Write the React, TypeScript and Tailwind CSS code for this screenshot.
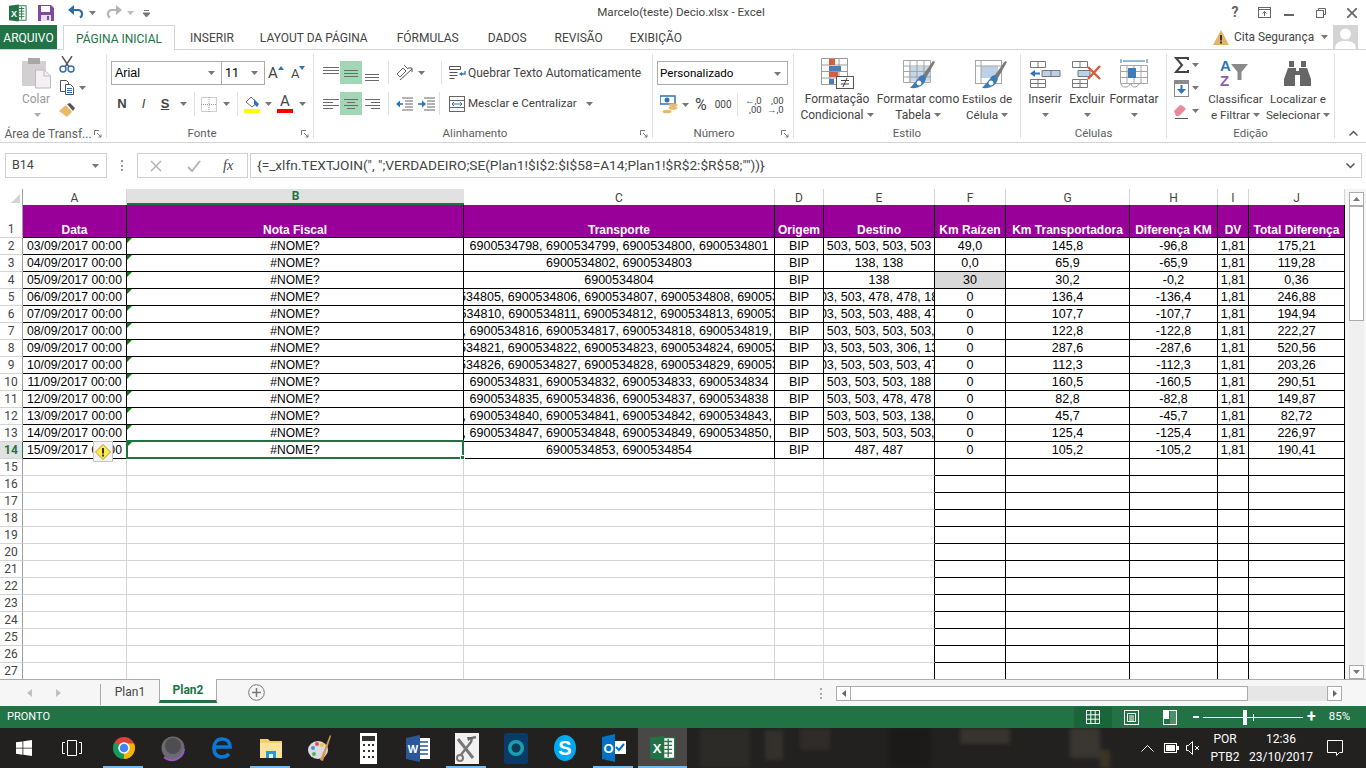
import type { ReactNode } from "react";

const rows = [
  ["03/09/2017 00:00", "6900534798, 6900534799, 6900534800, 6900534801", "503, 503, 503, 503", "49,0", "145,8", "-96,8", "175,21"],
  ["04/09/2017 00:00", "6900534802, 6900534803", "138, 138", "0,0", "65,9", "-65,9", "119,28"],
  ["05/09/2017 00:00", "6900534804", "138", "30", "30,2", "-0,2", "0,36"],
  ["06/09/2017 00:00", "6900534805, 6900534806, 6900534807, 6900534808, 6900534809", "503, 503, 478, 478, 188", "0", "136,4", "-136,4", "246,88"],
  ["07/09/2017 00:00", "6900534810, 6900534811, 6900534812, 6900534813, 6900534814", "503, 503, 503, 488, 478", "0", "107,7", "-107,7", "194,94"],
  ["08/09/2017 00:00", "6900534815, 6900534816, 6900534817, 6900534818, 6900534819, 6900534820", "503, 503, 503, 503, 503, 503", "0", "122,8", "-122,8", "222,27"],
  ["09/09/2017 00:00", "6900534821, 6900534822, 6900534823, 6900534824, 6900534825", "503, 503, 503, 306, 138", "0", "287,6", "-287,6", "520,56"],
  ["10/09/2017 00:00", "6900534826, 6900534827, 6900534828, 6900534829, 6900534830", "503, 503, 503, 503, 478", "0", "112,3", "-112,3", "203,26"],
  ["11/09/2017 00:00", "6900534831, 6900534832, 6900534833, 6900534834", "503, 503, 503, 188", "0", "160,5", "-160,5", "290,51"],
  ["12/09/2017 00:00", "6900534835, 6900534836, 6900534837, 6900534838", "503, 503, 478, 478", "0", "82,8", "-82,8", "149,87"],
  ["13/09/2017 00:00", "6900534839, 6900534840, 6900534841, 6900534842, 6900534843, 6900534844", "503, 503, 503, 503, 138, 138", "0", "45,7", "-45,7", "82,72"],
  ["14/09/2017 00:00", "6900534846, 6900534847, 6900534848, 6900534849, 6900534850, 6900534851", "503, 503, 503, 503, 503, 503", "0", "125,4", "-125,4", "226,97"],
  ["15/09/2017 00:00", "6900534853, 6900534854", "487, 487", "0", "105,2", "-105,2", "190,41"],
];

const colA = "w-[104px]";
const colB = "w-[337px]";
const colC = "w-[311px]";
const colD = "w-[49px]";
const colE = "w-[111px]";
const colF = "w-[71px]";
const colG = "w-[124px]";
const colH = "w-[88px]";
const colI = "w-[31px]";
const colJ = "w-[96px]";

function Caret({ className = "" }: { className?: string }) {
  return (
    <svg width="7" height="4" viewBox="0 0 7 4" className={"shrink-0 " + className}>
      <path d="M0 0h7L3.5 4z" fill="#777" />
    </svg>
  );
}

function Launcher() {
  return (
    <svg width="8" height="8" viewBox="0 0 8 8" className="absolute right-[4px] top-[2px]" fill="none" stroke="#777">
      <path d="M.5 5V.5H5" />
      <path d="M3 3l4 4M7 4.5V7H4.5" />
    </svg>
  );
}

function Group({ label, width, labelPad = "", launcher, children }: { label: string; width: string; labelPad?: string; launcher?: boolean; children: ReactNode }) {
  return (
    <div className={"flex h-[84px] shrink-0 flex-col border-r border-[#e1e1e1] " + width}>
      <div className="h-[74px] shrink-0">{children}</div>
      <div className={"relative flex h-[11px] shrink-0 items-center justify-center text-[#5e5e5e] " + labelPad}>
        <span className="whitespace-nowrap">{label}</span>
        {launcher && <Launcher />}
      </div>
    </div>
  );
}

function Lines({ ys }: { ys: [number, number, number][] }) {
  return (
    <svg width="18" height="18" viewBox="0 0 18 18" stroke="#6a6a6a" fill="none">
      {ys.map(([y, a, b]) => (
        <path key={y + "-" + a} d={`M${a} ${y + 0.5}H${b}`} />
      ))}
    </svg>
  );
}

function BigButton({ width, lines, icon, caretOnly }: { width: string; lines: string[]; icon: ReactNode; caretOnly?: boolean }) {
  return (
    <div className={"flex shrink-0 flex-col items-center " + width}>
      <div className="flex h-[36px] items-center">{icon}</div>
      <div className="whitespace-nowrap leading-[16px]">{lines[0]}</div>
      {caretOnly ? (
        <div className="flex h-[16px] items-center"><Caret /></div>
      ) : (
        <div className="flex items-center gap-[3px] whitespace-nowrap leading-[16px]">
          {lines[1]}
          <Caret />
        </div>
      )}
    </div>
  );
}

function ExcelLogo({ size = 20 }: { size?: number }) {
  return (
    <svg width={size} height={size} viewBox="0 0 20 20">
      <rect x="7" y="2" width="12" height="16" fill="#fff" stroke="#217346" />
      <path d="M11 5h6M11 8h6M11 11h6M11 14h6M14 3v14" stroke="#217346" />
      <path d="M0 2l11-1.5v19L0 18z" fill="#217346" />
      <text x="5.5" y="14" textAnchor="middle" fill="#fff" fontSize="10" fontWeight="700" fontFamily="Liberation Sans">X</text>
    </svg>
  );
}

function TitleBar() {
  return (
    <div className="flex h-[25px] shrink-0 items-center text-[#444]">
      <div className="ml-[9px]"><ExcelLogo size={18} /></div>
      <svg width="16" height="16" viewBox="0 0 16 16" className="ml-[11px]">
        <path d="M0 0h13l3 3v13H0z" fill="#7c4b9e" />
        <rect x="3" y="1" width="9" height="6" fill="#fff" />
        <rect x="3" y="10" width="10" height="6" fill="#e8dff0" />
        <rect x="9" y="11" width="2" height="4" fill="#7c4b9e" />
      </svg>
      <svg width="16" height="15" viewBox="0 0 16 15" fill="none" className="ml-[14px]">
        <path d="M3 5h7a4 4 0 0 1 2 7.5" stroke="#2e6da4" strokeWidth="2.2" />
        <path d="M6 0v10L0 5z" fill="#2e6da4" />
      </svg>
      <Caret className="ml-[5px]" />
      <svg width="16" height="15" viewBox="0 0 16 15" fill="none" className="ml-[10px]">
        <path d="M13 5H6a4 4 0 0 0-2 7.5" stroke="#b5b5b5" strokeWidth="2.2" />
        <path d="M10 0v10l6-5z" fill="#b5b5b5" />
      </svg>
      <Caret className="ml-[5px] opacity-50" />
      <svg width="7" height="8" viewBox="0 0 7 8" className="ml-[9px]">
        <path d="M1 1.5h5M0 4h7L3.5 8z" stroke="#777" fill="#777" strokeWidth="1" />
      </svg>
      <div className="ml-[446px] w-[170px] whitespace-nowrap text-center text-[11.6px]">Marcelo(teste) Decio.xlsx - Excel</div>
      <div className="ml-[462px] flex w-[14px] justify-center text-[14px] font-bold text-[#666]">?</div>
      <svg width="13" height="11" viewBox="0 0 13 11" fill="none" stroke="#666" className="ml-[16px]">
        <rect x=".5" y=".5" width="12" height="10" />
        <path d="M.5 2.5h12M6.5 9V4.5M4.5 6.5l2-2 2 2" />
      </svg>
      <svg width="10" height="3" viewBox="0 0 10 3" className="ml-[13px] mt-[6px]"><rect width="10" height="2" fill="#666" /></svg>
      <svg width="10" height="10" viewBox="0 0 10 10" fill="none" stroke="#666" className="ml-[22px]">
        <path d="M2.5 2V.5h7v6H8" />
        <rect x=".5" y="2.5" width="7" height="7" />
      </svg>
      <svg width="10" height="10" viewBox="0 0 10 10" stroke="#666" strokeWidth="1.7" className="ml-[21px]">
        <path d="M0 0l10 10M10 0L0 10" />
      </svg>
    </div>
  );
}

function TabBar() {
  const tabs = [
    ["INSERIR", "ml-[15px]"],
    ["LAYOUT DA PÁGINA", "ml-[26px]"],
    ["FÓRMULAS", "ml-[29px]"],
    ["DADOS", "ml-[29px]"],
    ["REVISÃO", "ml-[28px]"],
    ["EXIBIÇÃO", "ml-[27px]"],
  ];
  return (
    <div className="flex h-[25px] shrink-0 items-stretch border-b border-[#d4d4d4] text-[12px] text-[#444]">
      <div className="flex w-[57px] items-center justify-center bg-[#217346] pt-px text-white">ARQUIVO</div>
      <div className="z-10 ml-[6px] flex h-[25px] w-[112px] items-center justify-center border border-b-0 border-[#d4d4d4] bg-white pt-px text-[#217346]">
        PÁGINA INICIAL
      </div>
      {tabs.map(([t, c]) => (
        <div key={t} className={"flex items-center whitespace-nowrap pt-px " + c}>{t}</div>
      ))}
      <svg width="16" height="15" viewBox="0 0 16 15" className="ml-[531px] mt-[5px]">
        <path d="M8 0l8 15H0z" fill="#e3b36b" />
        <rect x="7" y="5" width="2" height="5.5" fill="#333" />
        <rect x="7" y="11.5" width="2" height="2" fill="#333" />
      </svg>
      <div className="ml-[5px] flex items-center whitespace-nowrap pt-px text-[11.9px]">Cita Segurança</div>
      <Caret className="ml-[7px] mt-[10px]" />
      <svg width="25" height="24" viewBox="0 0 25 24" className="ml-[5px]">
        <rect width="25" height="24" fill="#d4d4d4" />
        <circle cx="12.5" cy="9" r="5.5" fill="#fff" />
        <path d="M2 24c0-7 5-8 10.5-8S23 17 23 24z" fill="#fff" />
      </svg>
    </div>
  );
}

function ClipboardGroup() {
  return (
    <Group label="Área de Transf..." width="w-[107px]" labelPad="pr-[10px] text-[12px]" launcher>
      <div className="flex pl-[22px]">
        <div className="flex w-[30px] flex-col items-center">
          <svg width="30" height="31" viewBox="0 0 30 31" className="mt-[4px]">
            <rect y="3" width="24" height="25" rx="1" fill="#d3d0d2" />
            <rect x="6" y="0" width="12" height="6" fill="#aaa7a9" />
            <path d="M13.5 12h9l6 6v12h-15z" fill="#f4f0f4" stroke="#bdb9bc" />
            <path d="M22 12v6h6" fill="none" stroke="#bdb9bc" />
          </svg>
          <div className="-ml-[2px] mt-[2px] leading-[16px] text-[#9a9a9a]">Colar</div>
          <Caret className="mt-[6px] opacity-60" />
        </div>
        <div className="ml-[7px] flex flex-col">
          <svg width="16" height="17" viewBox="0 0 16 17" fill="none" className="mt-[2px]">
            <path d="M3 0l7 11M13 0L6 11" stroke="#555" strokeWidth="1.4" />
            <circle cx="4" cy="13" r="3" stroke="#2e6da4" strokeWidth="1.4" />
            <circle cx="12" cy="13" r="3" stroke="#2e6da4" strokeWidth="1.4" />
          </svg>
          <div className="ml-[1px] mt-[7px] flex items-center">
            <svg width="15" height="15" viewBox="0 0 15 15" fill="#fff">
              <path d="M.5.5h6l2 2v9h-8z" stroke="#555" />
              <path d="M5.5 4.5h5l3 3v7h-8z" stroke="#555" />
              <path d="M7 8.5h5M7 10.5h5M7 12.5h5" stroke="#2e6da4" />
            </svg>
            <Caret className="ml-[4px]" />
          </div>
          <svg width="17" height="14" viewBox="0 0 17 14" className="mt-[8px]">
            <path d="M0 8l7-6 6 7-5 5z" fill="#e8b86d" />
            <path d="M8 1l3-1 5 5-2 3z" fill="#555" />
          </svg>
        </div>
      </div>
    </Group>
  );
}

function FontGroup() {
  return (
    <Group label="Fonte" width="w-[207px]" labelPad="pr-[16px] text-[11.5px]" launcher>
      <div className="ml-[4px] mt-[7px] flex h-[24px] items-center">
        <div className="flex h-[24px] w-[111px] items-center justify-between border border-[#ababab] pl-[3px] pr-[6px] font-['Liberation_Sans',sans-serif] text-[12.5px] text-black">
          Arial <Caret />
        </div>
        <div className="-ml-px flex h-[24px] w-[44px] items-center justify-between border border-[#ababab] pl-[3px] pr-[6px] text-[12.5px] text-black">
          11 <Caret />
        </div>
        <div className="ml-[3px] flex w-[18px] items-start text-[15px] leading-[15px]">
          A
          <svg width="6" height="4" viewBox="0 0 6 4"><path d="M0 4h6L3 0z" fill="#2e75b6" /></svg>
        </div>
        <div className="ml-[5px] flex w-[18px] items-start text-[13px] leading-[15px]">
          A
          <svg width="6" height="4" viewBox="0 0 6 4"><path d="M0 0h6L3 4z" fill="#2e75b6" /></svg>
        </div>
      </div>
      <div className="ml-[4px] mt-[7px] flex h-[24px] items-center font-['Liberation_Sans',sans-serif] text-[#444]">
        <div className="w-[22px] text-center text-[13px] font-bold">N</div>
        <div className="w-[21px] text-center text-[13px] italic">I</div>
        <div className="w-[22px] text-center text-[13px] font-bold underline">S</div>
        <Caret className="ml-[4px]" />
        <div className="ml-[7px] h-[24px] w-px bg-[#e1e1e1]" />
        <svg width="16" height="15" viewBox="0 0 16 15" fill="none" stroke="#9a9a9a" strokeDasharray="1 1" className="ml-[6px]">
          <rect x=".5" y=".5" width="15" height="14" />
          <path d="M8 0v15M0 7.5h16" />
        </svg>
        <Caret className="ml-[6px]" />
        <div className="ml-[7px] h-[24px] w-px bg-[#e1e1e1]" />
        <div className="ml-[6px] flex w-[16px] flex-col items-center">
          <svg width="15" height="12" viewBox="0 0 15 12" fill="none">
            <path d="M6 1l6 6-5 4-6-5z" stroke="#666" />
            <path d="M9 3l5 5-2 3-3-3z" fill="#2e75b6" />
          </svg>
          <div className="mt-px h-[4px] w-[16px] bg-[#ffff00]" />
        </div>
        <Caret className="ml-[5px]" />
        <div className="ml-[5px] flex w-[16px] flex-col items-center">
          <div className="h-[13px] font-['Roboto',sans-serif] text-[15px] leading-[13px]">A</div>
          <div className="mt-[1px] h-[4px] w-[16px] bg-[#ff0000]" />
        </div>
        <Caret className="ml-[6px]" />
      </div>
    </Group>
  );
}

function AlignmentGroup() {
  return (
    <Group label="Alinhamento" width="w-[339px]" labelPad="pr-[16px] text-[11.5px]" launcher>
      <div className="ml-[7px] mt-[7px] flex h-[23px] items-center">
        <div className="flex w-[19px] justify-center"><Lines ys={[[3, 1, 17], [6, 1, 17], [9, 1, 17]]} /></div>
        <div className="flex h-[23px] w-[22px] items-center justify-center bg-[#a3d6b5]"><Lines ys={[[6, 2, 16], [9, 2, 16], [12, 2, 16]]} /></div>
        <div className="flex w-[20px] justify-center"><Lines ys={[[10, 2, 16], [13, 2, 16], [16, 2, 16]]} /></div>
        <div className="ml-[6px] h-[23px] w-px bg-[#e1e1e1]" />
        <svg width="17" height="17" viewBox="0 0 17 17" fill="none" stroke="#666" className="ml-[7px]">
          <path d="M1 10l6-6 3 3-6 6zM8 1l4 4" />
          <path d="M4 16L16 5M12 4h4v4" stroke="#555" />
        </svg>
        <Caret className="ml-[5px]" />
        <div className="ml-[16px] h-[23px] w-px bg-[#e1e1e1]" />
        <svg width="17" height="16" viewBox="0 0 17 16" fill="none" className="ml-[7px]">
          <path d="M.5 1.5h11v3H.5zM.5 7.5h8M.5 10.5h8M.5 13.5h5" stroke="#555" />
          <path d="M16 6v3h-5" stroke="#2e75b6" strokeWidth="1.3" />
          <path d="M13 7l-3 2 3 2z" fill="#2e75b6" />
        </svg>
        <span className="ml-[2px] whitespace-nowrap text-[12px]">Quebrar Texto Automaticamente</span>
      </div>
      <div className="ml-[7px] mt-[8px] flex h-[23px] items-center">
        <div className="flex w-[19px] justify-center"><Lines ys={[[4, 1, 17], [7, 1, 11], [10, 1, 17], [13, 1, 11]]} /></div>
        <div className="flex h-[23px] w-[22px] items-center justify-center bg-[#a3d6b5]"><Lines ys={[[4, 2, 16], [7, 5, 13], [10, 2, 16], [13, 5, 13]]} /></div>
        <div className="flex w-[20px] justify-center"><Lines ys={[[4, 2, 17], [7, 8, 17], [10, 2, 17], [13, 8, 17]]} /></div>
        <div className="ml-[6px] h-[23px] w-px bg-[#e1e1e1]" />
        <svg width="17" height="14" viewBox="0 0 17 14" fill="none" className="ml-[7px]">
          <path d="M6 1h11M9 4h8M9 7h8M9 10h8M6 13h11" stroke="#666" />
          <path d="M7 7H2" stroke="#2e75b6" strokeWidth="1.6" />
          <path d="M4 3.5L0 7l4 3.5z" fill="#2e75b6" />
        </svg>
        <svg width="17" height="14" viewBox="0 0 17 14" fill="none" className="ml-[5px]">
          <path d="M6 1h11M9 4h8M9 7h8M9 10h8M6 13h11" stroke="#666" />
          <path d="M0 7h5" stroke="#2e75b6" strokeWidth="1.6" />
          <path d="M4 3.5L8 7l-4 3.5z" fill="#2e75b6" />
        </svg>
        <div className="ml-[4px] h-[23px] w-px bg-[#e1e1e1]" />
        <svg width="17" height="16" viewBox="0 0 17 16" fill="none" className="ml-[9px]">
          <rect x=".5" y=".5" width="15" height="15" stroke="#666" />
          <path d="M.5 4.5h15M.5 11.5h15" stroke="#666" />
          <path d="M3 8h10M3 8l2-2M3 8l2 2M13 8l-2-2M13 8l-2 2" stroke="#2e75b6" />
        </svg>
        <span className="ml-[2px] whitespace-nowrap text-[11.6px]">Mesclar e Centralizar</span>
        <Caret className="ml-[9px]" />
      </div>
    </Group>
  );
}

function NumberGroup() {
  return (
    <Group label="Número" width="w-[141px]" labelPad="pr-[18px] text-[11.5px]" launcher>
      <div className="ml-[4px] mt-[7px] flex h-[24px] w-[131px] items-center justify-between border border-[#ababab] pl-[2px] pr-[6px] pt-px text-[11.6px] text-black">
        Personalizado <Caret />
      </div>
      <div className="ml-[7px] mt-[8px] flex h-[23px] items-center">
        <svg width="18" height="19" viewBox="0 0 18 19">
          <rect x="0" y="1" width="15" height="8" fill="#fff" stroke="#2e75b6" strokeWidth="1.5" />
          <circle cx="7" cy="5" r="2.5" fill="#2e75b6" />
          <ellipse cx="13" cy="10" rx="4.5" ry="1.8" fill="#e8b86d" />
          <ellipse cx="13" cy="13" rx="4.5" ry="1.8" fill="#e8b86d" />
          <ellipse cx="7" cy="16.5" rx="4.5" ry="1.8" fill="#e8b86d" />
        </svg>
        <Caret className="ml-[4px]" />
        <span className="ml-[6px] text-[16px] leading-none">%</span>
        <span className="ml-[8px] text-[10px]">000</span>
        <div className="ml-[5px] h-[23px] w-px bg-[#e1e1e1]" />
        <div className="ml-[7px] flex w-[17px] flex-col text-right text-[9.5px] leading-[9px]">
          <span className="text-[#2e75b6]">←<span className="text-[#444]">,0</span></span>
          <span>,00</span>
        </div>
        <div className="ml-[5px] flex w-[17px] flex-col text-right text-[9.5px] leading-[9px]">
          <span>,00</span>
          <span className="text-[#2e75b6]">→<span className="text-[#444]">,0</span></span>
        </div>
      </div>
    </Group>
  );
}

function CondIcon() {
  return (
    <svg width="33" height="31" viewBox="0 0 33 31">
      <path d="M.5.5h26v26H.5zM9 .5v26M18 .5v26M.5 7h26M.5 13.5h26M.5 20h26" fill="#fff" stroke="#9a9a9a" />
      <rect x="8" y="1" width="6" height="6" fill="#d75b3c" />
      <rect x="8" y="8" width="12" height="5" fill="#4a7ebb" />
      <rect x="8" y="14" width="9" height="5" fill="#d75b3c" />
      <rect x="8" y="21" width="5" height="5" fill="#4a7ebb" />
      <rect x="15.5" y="18.5" width="17" height="12" fill="#fff" stroke="#555" />
      <path d="M20 22.5h8M20 26h8M22 29l4-9" stroke="#444" />
    </svg>
  );
}

function BrushOver({ children }: { children: ReactNode }) {
  return (
    <svg width="32" height="31" viewBox="0 0 32 31">
      {children}
      <path d="M32 4l-2-1-10 14 3 3z" fill="#7a7a7a" />
      <path d="M21 17c-5 0-5 3-7 5l-7 8c9 1 15-3 16-10z" fill="#3d7ab8" />
      <circle cx="16" cy="25" r="2" fill="#fff" stroke="#fff" />
    </svg>
  );
}

function TableIcon() {
  return (
    <BrushOver>
      <path d="M.5 2.5h27v22H.5zM7 2.5v22M14 2.5v22M21 2.5v22M.5 8h27M.5 13.5h27M.5 19h27" fill="#fff" stroke="#a5a5a5" />
      <rect x="7.5" y="8.5" width="20" height="15" fill="#bcd0e6" opacity=".85" />
      <path d="M7 8v16M14 8v16M21 8v16M7 13.5h21M7 19h21" stroke="#a5a5a5" fill="none" />
    </BrushOver>
  );
}

function StyleIcon() {
  return (
    <BrushOver>
      <rect x=".5" y="2.5" width="26" height="23" fill="#fff" stroke="#a5a5a5" />
      <rect x="6" y="8" width="17" height="12" fill="#bcd0e6" />
      <path d="M6 2.5v23M.5 8h26" stroke="#a5a5a5" fill="none" />
    </BrushOver>
  );
}

function StyleGroup() {
  return (
    <Group label="Estilo" width="w-[227px]" labelPad="text-[11.5px]">
      <div className="flex pt-[1px]">
        <BigButton width="ml-[4px] w-[78px]" lines={["Formatação", "Condicional"]} icon={<CondIcon />} />
        <BigButton width="w-[84px]" lines={["Formatar como", "Tabela"]} icon={<div className="ml-[2px]"><TableIcon /></div>} />
        <BigButton width="w-[54px] text-[11.6px]" lines={["Estilos de", "Célula"]} icon={<div className="ml-[7px]"><StyleIcon /></div>} />
      </div>
    </Group>
  );
}

function CellsBase({ children }: { children: ReactNode }) {
  return (
    <svg width="32" height="31" viewBox="0 0 32 31" fill="none">
      <path d="M1.5 3.5h15v6h-15zM9 3.5v6M1.5 21.5h15v8h-15zM1.5 25.5h15M9 21.5v8" stroke="#777" />
      {children}
    </svg>
  );
}

function CellsGroup() {
  return (
    <Group label="Células" width="w-[146px]" labelPad="text-[11.5px]">
      <div className="flex pt-[1px]">
        <BigButton
          width="ml-[3px] w-[42px]"
          caretOnly
          lines={["Inserir"]}
          icon={
            <CellsBase>
              <path d="M13 12.5h18v6H13zM22 12.5v6" stroke="#777" fill="#bcd0e6" />
              <path d="M3 15.5h8" stroke="#2e75b6" strokeWidth="2" />
              <path d="M6 12l-5 3.5L6 19z" fill="#2e75b6" />
            </CellsBase>
          }
        />
        <BigButton
          width="w-[42px]"
          caretOnly
          lines={["Excluir"]}
          icon={
            <CellsBase>
              <path d="M7 12.5h12v6H7z" stroke="#777" fill="#bcd0e6" />
              <path d="M17 9l12 12M29 8L17 21" stroke="#d75b3c" strokeWidth="2.4" />
            </CellsBase>
          }
        />
        <BigButton
          width="w-[52px]"
          caretOnly
          lines={["Formatar"]}
          icon={
            <svg width="28" height="31" viewBox="0 0 28 31" fill="none">
              <path d="M1 1v4M27 1v4M3 3h22" stroke="#2e75b6" />
              <path d="M.5 7.5h27v18H.5zM7 7.5v18M14 7.5v18M21 7.5v18M.5 13.5h27M.5 19.5h27" fill="#fff" stroke="#a5a5a5" />
              <rect x="8" y="10" width="8" height="10" fill="#3f7cb8" />
              <path d="M1 26c1 3 3 3 5 3s3-1 4-3M11 26c1 3 3 3 4 3s3-1 4-3" stroke="#999" />
            </svg>
          }
        />
      </div>
    </Group>
  );
}

function EditGroup() {
  return (
    <Group label="Edição" width="w-[168px]" labelPad="text-[11.5px]">
      <div className="flex">
        <div className="ml-[7px] flex w-[31px] flex-col">
          <div className="flex h-[20px] items-center pt-[2px]">
            <svg width="15" height="16" viewBox="0 0 15 16" fill="none"><path d="M14 3V1H2l6 7-6 7h12v-2" stroke="#444" strokeWidth="2" /></svg>
            <Caret className="ml-[3px]" />
          </div>
          <div className="mt-[4px] flex h-[20px] items-center">
            <svg width="15" height="17" viewBox="0 0 15 17">
              <rect x=".5" y=".5" width="14" height="16" fill="#fff" stroke="#8a8a8a" />
              <rect x="0" y="0" width="15" height="4" fill="#8a8a8a" />
              <path d="M7.5 5v6" stroke="#2e75b6" strokeWidth="2" />
              <path d="M3 9l4.5 5L12 9z" fill="#2e75b6" />
            </svg>
            <Caret className="ml-[3px]" />
          </div>
          <div className="mt-[3px] flex h-[20px] items-center">
            <svg width="15" height="15" viewBox="0 0 15 15">
              <path d="M0 7l6-6 3 1 3 3-7 7H2z" fill="#e98a9b" />
              <path d="M1 14.5h13" stroke="#555" />
            </svg>
            <Caret className="ml-[3px]" />
          </div>
        </div>
        <div className="pt-[1px]">
          <BigButton
            width="w-[61px] text-[11.7px]"
            lines={["Classificar", "e Filtrar"]}
            icon={
              <div className="-ml-[3px] flex items-center font-['Liberation_Sans',sans-serif] text-[15px] font-bold leading-[15px]">
                <div className="flex flex-col">
                  <span className="text-[#2e75b6]">A</span>
                  <span className="text-[#8e5bb0]">Z</span>
                </div>
                <svg width="17" height="17" viewBox="0 0 17 17" className="mb-[4px]"><path d="M0 1h17L10.5 9v8h-4V9z" fill="#8a8a8a" /></svg>
              </div>
            }
          />
        </div>
        <div className="pt-[1px]">
          <BigButton
            width="ml-[1px] w-[62px] text-[11.6px]"
            lines={["Localizar e", "Selecionar"]}
            icon={
              <svg width="27" height="28" viewBox="0 0 27 28" fill="#666" className="-ml-[2px]">
                <path d="M5 2h5v6H5zM17 2h5v6h-5z" />
                <path d="M4 9h8v3h3V9h8l4 11v7H16V16h-5v11H0v-7z" />
              </svg>
            }
          />
        </div>
      </div>
    </Group>
  );
}

function Ribbon() {
  return (
    <div className="flex h-[93px] shrink-0 border-b border-[#d4d4d4] pt-[4px] font-['Roboto',sans-serif] text-[12px] text-[#444]">
      <ClipboardGroup />
      <FontGroup />
      <AlignmentGroup />
      <NumberGroup />
      <StyleGroup />
      <CellsGroup />
      <EditGroup />
      <div className="flex flex-1 items-end pb-[6px] pl-[14px]">
        <svg width="9" height="6" viewBox="0 0 9 6" fill="none" stroke="#555" strokeWidth="1.5"><path d="M.5 5.5l4-4 4 4" /></svg>
      </div>
    </div>
  );
}

function FormulaBar() {
  return (
    <div className="flex h-[46px] shrink-0 items-start pt-[10px] text-[#444]">
      <div className="ml-[5px] flex h-[25px] w-[102px] items-center justify-between border border-[#d0d0d0] pl-[6px] pr-[7px] text-[12.5px]">
        B14 <Caret />
      </div>
      <div className="ml-[14px] mt-[7px] flex h-[11px] w-[3px] flex-col justify-between">
        <div className="h-[2px] w-[2px] bg-[#999]" />
        <div className="h-[2px] w-[2px] bg-[#999]" />
        <div className="h-[2px] w-[2px] bg-[#999]" />
      </div>
      <div className="ml-[13px] flex h-[25px] w-[111px] items-center border border-[#d0d0d0]">
        <svg width="12" height="12" viewBox="0 0 12 12" stroke="#b5b5b5" strokeWidth="1.5" className="ml-[12px]"><path d="M1 1l10 10M11 1L1 11" /></svg>
        <svg width="14" height="12" viewBox="0 0 14 12" fill="none" stroke="#b5b5b5" strokeWidth="2" className="ml-[25px]"><path d="M1 7l4 4 8-10" /></svg>
        <span className="ml-[22px] font-['Liberation_Serif',serif] text-[14px] italic">fx</span>
      </div>
      <div className="ml-[2px] flex h-[25px] w-[1112px] items-center justify-between border border-[#d0d0d0] pl-[6px] pr-[6px] text-[13.7px]">
        <span className="whitespace-nowrap">{'{=_xlfn.TEXTJOIN(", ";VERDADEIRO;SE(Plan1!$I$2:$I$58=A14;Plan1!$R$2:$R$58;""))}'}</span>
        <svg width="9" height="6" viewBox="0 0 9 6" fill="none" stroke="#555" strokeWidth="1.5"><path d="M.5.5l4 4 4-4" /></svg>
      </div>
    </div>
  );
}

function ColHeaders() {
  const cols = [
    ["C", colC],
    ["D", colD],
    ["E", colE],
    ["F", colF],
    ["G", colG],
    ["H", colH],
    ["I", colI],
    ["J", colJ],
  ];
  const cell = "flex h-[16px] items-center justify-center border-r border-[#d4d4d4] pt-px ";
  return (
    <div className="flex h-[16px] shrink-0 font-['Roboto',sans-serif] text-[12px] text-[#444]">
      <div className="flex h-[16px] w-[23px] items-end justify-end border-r border-[#9f9f9f] p-[2px]">
        <svg width="9" height="9" viewBox="0 0 9 9"><path d="M9 0v9H0z" fill="#d4d4d4" /></svg>
      </div>
      <div className={cell + colA}>A</div>
      <div className={"flex h-[16px] items-center justify-center border-b-2 border-[#217346] bg-[#e1e1e1] font-bold text-[#217346] " + colB}>B</div>
      {cols.map(([c, w]) => (
        <div key={c} className={cell + w}>{c}</div>
      ))}
    </div>
  );
}

function RowNum({ n, active }: { n: number; active?: boolean }) {
  return (
    <div className={
      "flex w-[23px] shrink-0 items-end justify-center border-b border-r font-['Roboto',sans-serif] text-[12px] leading-[16px] " +
      (active ? "border-b-[#d4d4d4] border-r-[#217346] bg-[#e1e1e1] font-bold text-[#217346]" : "border-[#d4d4d4] border-r-[#9f9f9f] text-[#444]")
    }>
      {n}
    </div>
  );
}

function Cell({ w, children, extra = "" }: { w: string; children?: ReactNode; extra?: string }) {
  return (
    <div className={"relative flex shrink-0 items-center justify-center overflow-hidden whitespace-nowrap border-b border-r border-black " + w + " " + extra}>
      <span className="shrink-0">{children}</span>
    </div>
  );
}

function Flag() {
  return <div className="absolute left-0 top-0 h-[5px] w-[5px] bg-[#0f7b0f] [clip-path:polygon(0_0,100%_0,0_100%)]" />;
}

function HeadCell({ w, children }: { w: string; children: ReactNode }) {
  return (
    <div className={"flex shrink-0 items-end justify-center whitespace-nowrap border-b border-r border-black bg-[#990099] text-[12px] font-bold leading-[14px] text-white " + w}>
      {children}
    </div>
  );
}

function Sheet() {
  const empty = Array.from({ length: 13 }, (_, i) => i + 15);
  return (
    <div className="relative h-[474px] w-[1345px] overflow-hidden font-['Liberation_Sans',sans-serif] text-[12.5px] leading-[16px] text-black">
      <div className="flex h-[33px]">
        <RowNum n={1} />
        <HeadCell w={colA}>Data</HeadCell>
        <HeadCell w={colB}>Nota Fiscal</HeadCell>
        <HeadCell w={colC}>Transporte</HeadCell>
        <HeadCell w={colD}>Origem</HeadCell>
        <HeadCell w={colE}>Destino</HeadCell>
        <HeadCell w={colF}>Km Raízen</HeadCell>
        <HeadCell w={colG}>Km Transportadora</HeadCell>
        <HeadCell w={colH}>Diferença KM</HeadCell>
        <HeadCell w={colI}>DV</HeadCell>
        <HeadCell w={colJ}>Total Diferença</HeadCell>
      </div>
      {rows.map((r, i) => (
        <div key={r[0]} className="flex h-[17px]">
          <RowNum n={i + 2} active={i === 12} />
          <Cell w={colA} extra="text-[12.2px]">{r[0]}</Cell>
          <Cell w={colB} extra="text-[12px]"><Flag />#NOME?</Cell>
          <Cell w={colC}>{r[1]}</Cell>
          <Cell w={colD}>BIP</Cell>
          <Cell w={colE}>{r[2]}</Cell>
          <Cell w={colF} extra={r[3] === "30" ? "bg-[#d9d9d9]" : ""}>{r[3]}</Cell>
          <Cell w={colG}>{r[4]}</Cell>
          <Cell w={colH}>{r[5]}</Cell>
          <Cell w={colI}>1,81</Cell>
          <Cell w={colJ}>{r[6]}</Cell>
        </div>
      ))}
      {empty.map((n) => (
        <div key={n} className="flex h-[17px]">
          <RowNum n={n} />
          <div className={"border-b border-r border-[#d4d4d4] " + colA} />
          <div className={"border-b border-r border-[#d4d4d4] " + colB} />
          <div className={"border-b border-r border-[#d4d4d4] " + colC} />
          <div className={"border-b border-r border-[#d4d4d4] " + colD} />
          <div className={"border-b border-r border-b-[#d4d4d4] border-r-black " + colE} />
          <Cell w={colF} />
          <Cell w={colG} />
          <Cell w={colH} />
          <Cell w={colI} />
          <Cell w={colJ} />
        </div>
      ))}
      {/* selected cell */}
      <div className="absolute left-[126px] top-[235px] h-[19px] w-[338px] border-2 border-[#217346]">
        <div className="absolute -bottom-[3px] -right-[3px] h-[5px] w-[5px] border border-white bg-[#217346]" />
      </div>
      {/* erro de fórmula */}
      <div className="absolute left-[93px] top-[236px] flex h-[21px] w-[20px] items-center justify-center border border-[#c6c6c6] bg-[#f4f4f4]">
        <svg width="16" height="16" viewBox="0 0 16 16">
          <path d="M8 .5L15.500 8 8 15.500.5 8z" fill="#ffe94d" stroke="#b59a2a" />
          <rect x="7" y="4" width="2" height="5.500" fill="#333" />
          <rect x="7" y="10.500" width="2" height="2" fill="#333" />
        </svg>
      </div>
    </div>
  );
}

function VScroll() {
  return (
    <div className="flex w-[21px] flex-col items-center bg-[#f5f5f5] pl-[2px] pt-[3px]">
      <div className="flex h-[14px] w-[15px] items-center justify-center border border-[#ababab] bg-white">
        <svg width="7" height="4" viewBox="0 0 7 4"><path d="M0 4h7L3.5 0z" fill="#777" /></svg>
      </div>
      <div className="h-[115px] w-[15px] border border-[#ababab] bg-white" />
      <div className="w-[15px] flex-1 bg-[#f0f0f0]" />
      <div className="flex h-[14px] w-[15px] items-center justify-center border border-[#ababab] bg-white">
        <Caret />
      </div>
    </div>
  );
}

function SheetTabs() {
  return (
    <div className="flex h-[27px] shrink-0 border-t border-[#ababab] bg-[#f6f6f6] font-['Roboto',sans-serif] text-[12px] text-[#444]">
      <svg width="5" height="8" viewBox="0 0 5 8" className="ml-[27px] mt-[9px]"><path d="M5 0v8L0 4z" fill="#c0c0c0" /></svg>
      <svg width="5" height="8" viewBox="0 0 5 8" className="ml-[24px] mt-[9px]"><path d="M0 0v8l5-4z" fill="#c0c0c0" /></svg>
      <div className="ml-[39px] mt-[4px] h-[21px] w-px bg-[#ababab]" />
      <div className="flex h-[24px] w-[58px] items-center justify-center">Plan1</div>
      <div className="-mt-px flex h-[24px] w-[58px] items-center justify-center border-x border-[#ababab] border-b-[3px] border-b-[#217346] bg-white font-bold text-[#217346]">Plan2</div>
      <svg width="17" height="17" viewBox="0 0 17 17" fill="none" stroke="#777" className="ml-[31px] mt-[4px]">
        <circle cx="8.5" cy="8.5" r="7.8" />
        <path d="M8.5 4v9M4 8.5h9" strokeWidth="1.5" />
      </svg>
      <div className="ml-[555px] mt-[8px] flex h-[11px] w-[2px] flex-col justify-between">
        <div className="h-[2px] w-[2px] bg-[#aaa]" />
        <div className="h-[2px] w-[2px] bg-[#aaa]" />
        <div className="h-[2px] w-[2px] bg-[#aaa]" />
      </div>
      <div className="ml-[14px] mt-[6px] flex h-[15px] w-[506px]">
        <div className="flex w-[15px] items-center justify-center border border-[#ababab] bg-white">
          <svg width="4" height="7" viewBox="0 0 4 7"><path d="M4 0v7L0 3.5z" fill="#666" /></svg>
        </div>
        <div className="w-[397px] border-y border-r border-[#ababab] bg-white" />
        <div className="w-[79px] bg-[#e6e6e6]" />
        <div className="flex w-[15px] items-center justify-center border border-[#ababab] bg-white">
          <svg width="4" height="7" viewBox="0 0 4 7"><path d="M0 0v7l4-3.5z" fill="#666" /></svg>
        </div>
      </div>
    </div>
  );
}

function StatusBar() {
  return (
    <div className="flex h-[22px] shrink-0 items-center bg-[#217346] font-['Roboto',sans-serif] text-[11px] text-white">
      <div className="ml-[7px] w-[1067px] pt-px">PRONTO</div>
      <div className="flex h-[21px] w-[38px] items-center justify-center bg-[#19663a]">
        <svg width="14" height="14" viewBox="0 0 14 14" fill="none" stroke="#fff"><path d="M.5.5h13v13H.5zM.5 4.8h13M.5 9.200h13M4.800.5v13M9.200.5v13" /></svg>
      </div>
      <svg width="15" height="15" viewBox="0 0 15 15" fill="none" stroke="#fff" className="ml-[12px]"><rect x=".5" y=".5" width="14" height="14" /><path d="M3.500 3.500h8v8h-8zM5 6h5M5 8h5M5 10h5" /></svg>
      <svg width="14" height="15" viewBox="0 0 14 15" className="ml-[24px]"><rect x=".5" y=".5" width="13" height="14" fill="none" stroke="#fff" /><rect x="1" y="1" width="5" height="8" fill="#fff" /><rect x="7" y="1" width="6" height="13" fill="#fff" fillOpacity=".2" /></svg>
      <div className="ml-[16px] h-[2px] w-[6px] bg-white" />
      <div className="relative ml-[4px] h-px w-[100px] bg-white">
        <div className="absolute left-[40px] top-[-7px] h-[15px] w-[4px] bg-white" />
        <div className="absolute left-[50px] top-[-3px] h-[7px] w-px bg-white" />
      </div>
      <span className="ml-[4px] text-[16px] font-bold leading-none">+</span>
      <span className="ml-[13px] text-[11.5px]">85%</span>
    </div>
  );
}

function Slot({ on, active, children }: { on?: boolean; active?: boolean; children: ReactNode }) {
  return (
    <div className={"relative flex h-[40px] w-[49px] shrink-0 items-center justify-center " + (active ? "bg-[#4a4846]" : "")}>
      {children}
      {on && <div className={"absolute bottom-0 h-[2px] bg-[#76b9ed] " + (active ? "left-0 right-0" : "left-[4px] right-[5px]")} />}
    </div>
  );
}

function Taskbar() {
  return (
    <div className="relative flex h-[40px] shrink-0 items-center overflow-hidden bg-[#22211f] font-['Roboto',sans-serif] text-[12px] text-white">
      <svg className="absolute left-0 top-0 blur-[2px]" width="1366" height="40" viewBox="0 0 1366 40" aria-hidden="true">
        <rect x="700" y="0" width="50" height="40" fill="#2d2b28" />
        <rect x="765" y="2" width="18" height="30" fill="#34312d" />
        <rect x="800" y="0" width="30" height="22" fill="#302c29" />
        <rect x="890" y="0" width="40" height="40" fill="#1c1a18" />
        <rect x="960" y="0" width="50" height="16" fill="#383430" />
        <rect x="1070" y="0" width="30" height="30" fill="#3a3733" />
        <rect x="1100" y="22" width="10" height="18" fill="#3d3626" />
      </svg>
      <div className="relative flex w-[48px] justify-center">
        <svg width="16" height="16" viewBox="0 0 16 16" fill="#fff"><path d="M0 2.300l6.500-.9v6.300H0zM7.300 1.300L16 0v7.700H7.300zM0 8.500h6.500v6.200L0 13.800zM7.300 8.500H16V16l-8.700-1.200z" /></svg>
      </div>
      <div className="relative flex w-[48px] justify-center">
        <svg width="20" height="16" viewBox="0 0 20 16" fill="none" stroke="#fff"><path d="M5.500.5h9v15h-9zM3 2.500H.5v11H3M17 2.500h2.500v11H17" /></svg>
      </div>
      <div className="relative ml-[3px] flex">
        <Slot on>
          <svg width="24" height="24" viewBox="0 0 24 24">
            <circle cx="12" cy="12" r="11" fill="#db4437" />
            <path d="M12 12L2.500 6.500A11 11 0 0 0 12 23z" fill="#0f9d58" />
            <path d="M12 12v11a11 11 0 0 0 10-15.500H12z" fill="#f4b400" />
            <circle cx="12" cy="12" r="5" fill="#4285f4" stroke="#fff" strokeWidth="1.5" />
          </svg>
        </Slot>
        <Slot>
          <svg width="24" height="28" viewBox="0 0 24 28">
            <circle cx="12" cy="14" r="11.500" fill="#6a6a70" />
            <path d="M3 23a12 12 0 0 0 20-8" fill="none" stroke="#9a55c8" strokeWidth="2" />
            <circle cx="12" cy="12" r="8" fill="#4d4d52" />
          </svg>
        </Slot>
        <Slot>
          <svg width="20" height="22" viewBox="0 0 20 22" fill="none">
            <path d="M2 11c0-5 3-9 8-9s8 3 8 8H3M17 17c-2 2-4 3-7 3-5 0-8-3-8-9" stroke="#0a78d7" strokeWidth="3.6" />
          </svg>
        </Slot>
        <Slot on>
          <svg width="22" height="20" viewBox="0 0 22 20">
            <path d="M0 1h8l2 2h12v17H0z" fill="#f2cf6e" />
            <rect y="5" width="22" height="15" fill="#fbe39a" />
            <path d="M6 20v-7h10v7z" fill="#1f9bde" />
            <rect x="9" y="16" width="4" height="4" fill="#f8f1d0" />
          </svg>
        </Slot>
        <Slot>
          <svg width="24" height="28" viewBox="0 0 24 28">
            <ellipse cx="10" cy="16" rx="10" ry="9" fill="#d9dde3" />
            <circle cx="5" cy="14" r="2" fill="#4a90d9" />
            <circle cx="9" cy="10" r="2" fill="#e34f4f" />
            <circle cx="14" cy="11" r="2" fill="#f0c040" />
            <circle cx="6" cy="20" r="2" fill="#58b15b" />
            <path d="M22 1l-10 25 3 1L23 2z" fill="#d99a4a" />
          </svg>
        </Slot>
        <Slot>
          <svg width="17" height="31" viewBox="0 0 17 31">
            <rect width="17" height="31" fill="#fff" />
            <rect x="2" y="3" width="13" height="5" fill="#333" />
            <path d="M3 11h2v2H3zM8 11h2v2H8zM12 11h2v2h-2zM3 17h2v2H3zM8 17h2v2H8zM12 17h2v2h-2zM3 23h2v2H3zM8 23h2v2H8zM12 23h2v2h-2z" fill="#333" />
          </svg>
        </Slot>
        <Slot>
          <svg width="24" height="27" viewBox="0 0 24 27">
            <rect x="8" y="3" width="16" height="21" fill="#fff" />
            <path d="M12 7h10M12 11h10M12 15h10M12 19h10" stroke="#2b579a" strokeWidth="1.5" />
            <path d="M0 3l14-3v27L0 24z" fill="#2b579a" />
            <text x="7" y="18" textAnchor="middle" fill="#fff" fontSize="11" fontWeight="700" fontFamily="Liberation Sans">W</text>
          </svg>
        </Slot>
        <Slot on>
          <svg width="24" height="31" viewBox="0 0 24 31">
            <rect width="24" height="31" fill="#f1f1f1" />
            <path d="M3 6l15 19" stroke="#777" strokeWidth="3" />
            <path d="M21 4l-4 1-1 4-11 14" stroke="#777" strokeWidth="2.5" fill="none" />
            <path d="M12 4h8l-7 4z" fill="#666" />
            <circle cx="5" cy="25" r="3" fill="#f1f1f1" stroke="#777" strokeWidth="2" />
          </svg>
        </Slot>
        <Slot>
          <svg width="24" height="31" viewBox="0 0 24 31">
            <rect y="0" width="24" height="31" rx="3" fill="#0a3a66" />
            <circle cx="12" cy="15" r="8" fill="#1a9fb5" />
            <circle cx="12" cy="15" r="4.5" fill="#0d3a52" />
          </svg>
        </Slot>
        <Slot>
          <svg width="24" height="28" viewBox="0 0 24 28">
            <ellipse cx="12" cy="14" rx="11" ry="13" fill="#00a9f0" />
            <text x="12" y="21" textAnchor="middle" fill="#fff" fontSize="20" fontWeight="700" fontFamily="Liberation Sans">S</text>
          </svg>
        </Slot>
        <Slot on>
          <svg width="24" height="28" viewBox="0 0 24 28">
            <rect x="10" y="7" width="14" height="13" fill="#fff" />
            <path d="M14 13l3 3 5-6" stroke="#0072c6" strokeWidth="2" fill="none" />
            <path d="M0 3l13-3v28L0 25z" fill="#0072c6" />
            <text x="6.5" y="19" textAnchor="middle" fill="#fff" fontSize="13" fontWeight="700" fontFamily="Liberation Sans">O</text>
          </svg>
        </Slot>
        <Slot on active>
          <ExcelLogo size={26} />
        </Slot>
      </div>
      <svg width="13" height="8" viewBox="0 0 13 8" fill="none" stroke="#fff" className="relative ml-[454px]"><path d="M.5 7.5l6-6 6 6" /></svg>
      <svg width="15" height="10" viewBox="0 0 15 10" className="relative ml-[10px]"><rect x=".5" y=".5" width="12" height="9" fill="none" stroke="#fff" /><rect x="2" y="2" width="9" height="6" fill="#fff" /><rect x="13" y="3" width="2" height="4" fill="#fff" /></svg>
      <svg width="14" height="14" viewBox="0 0 14 14" fill="none" stroke="#fff" className="relative ml-[7px]"><path d="M.5 4.500h2L6.500.5v13l-4-4h-2zM9 5l4 4M13 5L9 9" /></svg>
      <div className="relative ml-[9px] flex w-[32px] flex-col items-center leading-[18px]"><span>POR</span><span>PTB2</span></div>
      <div className="relative ml-[9px] flex w-[62px] flex-col items-center leading-[18px]"><span>12:36</span><span>23/10/2017</span></div>
      <svg width="16" height="17" viewBox="0 0 16 17" fill="none" stroke="#fff" className="relative ml-[15px]"><path d="M.5.5h15v12h-3l-3 3v-3H.5z" /></svg>
    </div>
  );
}

export default function App() {
  return (
    <div className="flex h-[768px] w-[1366px] flex-col overflow-hidden bg-white font-['Roboto',sans-serif]">
      <TitleBar />
      <TabBar />
      <Ribbon />
      <FormulaBar />
      <div className="flex h-[490px] shrink-0">
        <div className="flex w-[1345px] flex-col">
          <ColHeaders />
          <Sheet />
        </div>
        <VScroll />
      </div>
      <SheetTabs />
      <StatusBar />
      <Taskbar />
    </div>
  );
}
